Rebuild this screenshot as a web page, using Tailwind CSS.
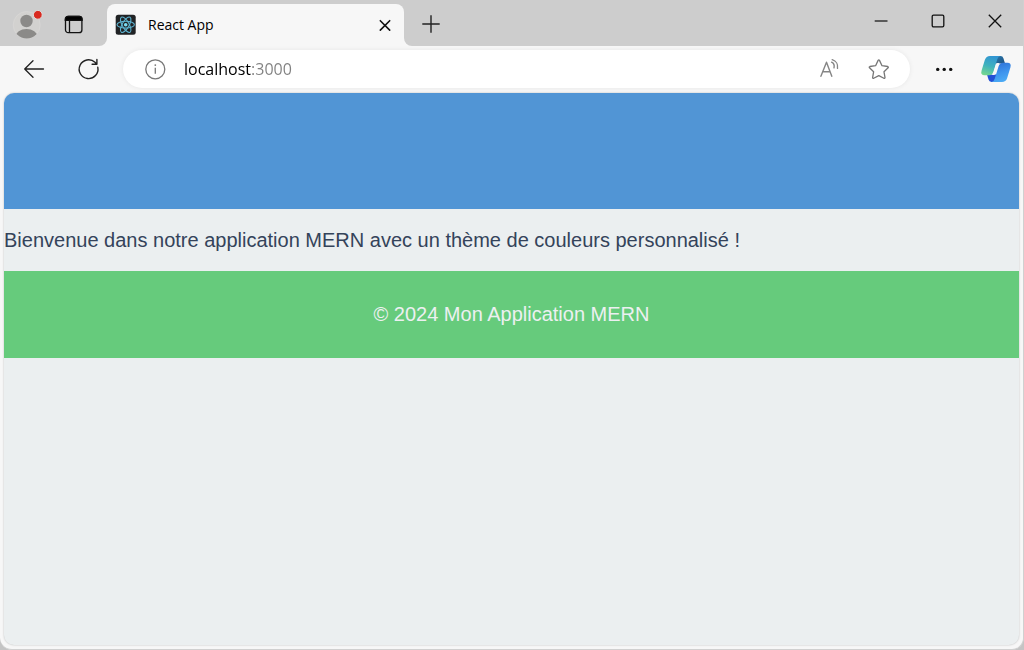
<!DOCTYPE html>
<html lang="fr">
<head>
<meta charset="utf-8">
<meta name="viewport" content="width=device-width, initial-scale=1">
<title>React App</title>
<script src="https://cdn.jsdelivr.net/npm/@tailwindcss/browser@4"></script>
</head>
<body class="bg-[#c4c4c4] font-['Open_Sans',sans-serif] text-black">
<div class="flex min-h-screen flex-col overflow-hidden rounded-b-xl border-r border-b border-[#d0d0d0] bg-[#f7f7f7]">

  <!-- Tab strip -->
  <header class="flex h-[46px]">
    <div class="flex w-[107px] shrink-0 items-center rounded-br-lg bg-[#cdcdcd] pl-3">
      <button aria-label="Profil" class="size-8">
        <svg viewBox="0 0 32 32" class="size-8">
          <defs><clipPath id="avatar"><circle cx="14.7" cy="18" r="13.5"/></clipPath></defs>
          <circle cx="14.7" cy="18" r="13.5" fill="#d2d1cf" stroke="#dad9d7" stroke-width=".7"/>
          <g clip-path="url(#avatar)" fill="#8b8a88"><circle cx="14.5" cy="14" r="6.2"/><ellipse cx="14.5" cy="30" rx="11" ry="8"/></g>
          <circle cx="25.8" cy="7.8" r="4.4" fill="#d9291f" stroke="#dedede" stroke-width="1"/>
        </svg>
      </button>
      <button aria-label="Espaces de travail" class="ml-[20px] mt-1">
        <svg viewBox="0 0 20 20" class="size-5" fill="none" stroke="#111" stroke-width="1.3">
          <rect x="1.5" y="1.5" width="16.4" height="16.2" rx="2.8"/>
          <path d="M1.3 5.3V4a2.7 2.7 0 0 1 2.7-2.7h11.4a2.7 2.7 0 0 1 2.7 2.7v1.3z" fill="#000"/>
          <path d="M5.5 6v11.5"/>
        </svg>
      </button>
    </div>
    <div class="w-[297px] shrink-0 bg-[#cdcdcd] pt-1">
      <div class="flex h-full items-center rounded-t-lg bg-[#f7f7f7] pl-2 pr-3">
        <svg viewBox="0 0 22 22" class="size-[22px]">
          <rect x=".7" y=".7" width="20" height="20" rx="2.5" fill="#212325"/>
          <g fill="none" stroke="#5db3d0" stroke-width="1.1">
            <ellipse cx="10.7" cy="10.7" rx="8.7" ry="3.4"/>
            <ellipse cx="10.7" cy="10.7" rx="8.7" ry="3.4" transform="rotate(60 10.7 10.7)"/>
            <ellipse cx="10.7" cy="10.7" rx="8.7" ry="3.4" transform="rotate(120 10.7 10.7)"/>
          </g>
          <circle cx="10.7" cy="10.7" r="1.8" fill="#7bdcf3"/>
        </svg>
        <span class="ml-[11px] pb-0.5 text-[14px]">React App</span>
        <button aria-label="Fermer l’onglet" class="ml-auto">
          <svg viewBox="0 0 14 14" class="size-[14px]" fill="none" stroke="#111" stroke-width="1.6" stroke-linecap="round"><path d="m2.3 2.7 9.4 9.4m0-9.4-9.4 9.4"/></svg>
        </button>
      </div>
    </div>
    <div class="flex min-w-0 flex-1 items-start justify-between rounded-bl-lg bg-[#cdcdcd]">
      <button aria-label="Nouvel onglet" class="grid h-12 w-[54px] place-items-center">
        <svg viewBox="0 0 18 18" class="size-[18px]" fill="none" stroke="#222" stroke-width="1.4"><path d="M9 .3v17.4M.3 9h17.4"/></svg>
      </button>
      <div class="flex">
        <button aria-label="Réduire" class="grid h-[42px] w-[57px] place-items-center">
          <svg viewBox="0 0 14 14" class="size-[14px]" fill="none" stroke="#333" stroke-width="1.5"><path d="M.7 7h12.8"/></svg>
        </button>
        <button aria-label="Agrandir" class="grid h-[42px] w-[57px] place-items-center">
          <svg viewBox="0 0 14 14" class="size-[14px]" fill="none" stroke="#111" stroke-width="1.3"><rect x="1.2" y="1.2" width="11.6" height="11.6" rx="1.3"/></svg>
        </button>
        <button aria-label="Fermer" class="grid h-[42px] w-[57px] place-items-center">
          <svg viewBox="0 0 14 14" class="size-[14px]" fill="none" stroke="#111" stroke-width="1.3"><path d="m.8.8 12.4 12.4m0-12.4L.8 13.2"/></svg>
        </button>
      </div>
    </div>
  </header>

  <!-- Toolbar -->
  <nav class="flex h-[47px] items-center pb-px pl-[22px] pr-[11px]">
    <button aria-label="Retour">
      <svg viewBox="0 0 24 24" class="size-6" fill="none" stroke="#222" stroke-width="1.3" stroke-linecap="round" stroke-linejoin="round"><path d="M21.5 12H2.7M11 3.7 2.7 12l8.3 8.3"/></svg>
    </button>
    <button aria-label="Actualiser" class="ml-[30px]">
      <svg viewBox="0 0 24 24" class="size-6" fill="none" stroke="#222" stroke-width="1.4" stroke-linecap="round" stroke-linejoin="round"><path d="M21.8 10.3a9.4 9.4 0 1 1-2.8-5l1.6 1.6M20.9 2.5v4.8h-4.8"/></svg>
    </button>
    <div class="ml-[23px] flex h-[38px] min-w-0 flex-1 items-center rounded-full bg-white pl-[21px] pr-5 shadow-[0_0_5px_rgba(0,0,0,0.07)]">
      <button aria-label="Informations sur le site">
        <svg viewBox="0 0 22 22" class="size-[22px]" fill="none" stroke="#777" stroke-width="1.3"><circle cx="11.3" cy="11.3" r="9.5"/><path d="M11.3 9.8v6"/><circle cx="11.3" cy="7.1" r=".9" fill="#777" stroke="none"/></svg>
      </button>
      <input type="text" aria-label="Adresse" value="localhost:3000" class="ml-[18px] h-[30px] min-w-0 flex-1 bg-linear-to-r from-black from-[67px] to-[#808080] to-[67px] bg-clip-text text-[16px] text-transparent outline-none">
      <button aria-label="Lecture à voix haute">
        <svg viewBox="0 0 22 22" class="size-[22px]" fill="none" stroke="#858585" stroke-width="1.4" stroke-linecap="round" stroke-linejoin="round"><path d="M1.9 18.3 7.5 4.2l5.3 14.1M3.6 13.7h7.4M12.6 4.2c2.1 1 2.9 3.5 2.4 5.6M13.2 1.7c4 1.2 6 4.8 5.3 8.6"/></svg>
      </button>
      <button aria-label="Ajouter aux favoris" class="ml-[27px]">
        <svg viewBox="0 0 22 22" class="size-[22px]" fill="none" stroke="#777" stroke-width="1.3" stroke-linejoin="round"><path d="M10.1 2.4q.7-1 1.4 0l2.5 5.3 5.7.8q1.1.4.4 1.3l-4.1 4 1 5.8q0 1.1-1.1.7l-5.1-2.7-5.1 2.7q-1.1.4-1.1-.7l1-5.8-4.1-4q-.7-.9.4-1.3l5.7-.8z"/></svg>
      </button>
    </div>
    <button aria-label="Paramètres et plus" class="ml-6">
      <svg viewBox="0 0 20 20" class="size-5" fill="#111"><circle cx="3.7" cy="10.4" r="1.7"/><circle cx="10.2" cy="10.4" r="1.7"/><circle cx="16.7" cy="10.4" r="1.7"/></svg>
    </button>
    <button aria-label="Copilot" class="ml-[26px]">
      <svg viewBox="0 0 32 30" class="h-[30px] w-8">
        <defs>
          <linearGradient id="ribbonLeft" x1=".5" y1="0" x2=".2" y2="1"><stop stop-color="#3296d2"/><stop offset=".5" stop-color="#3fb2bd"/><stop offset="1" stop-color="#77d88d"/></linearGradient>
          <linearGradient id="ribbonRight" x1=".5" y1="1" x2=".2" y2="0"><stop stop-color="#2f75da"/><stop offset=".5" stop-color="#3f95ee"/><stop offset="1" stop-color="#4eaff6"/></linearGradient>
          <linearGradient id="foldTop" x1="0" y1="0" x2="1" y2="1"><stop stop-color="#2b7dae"/><stop offset="1" stop-color="#1c4e82"/></linearGradient>
        </defs>
        <path d="M15 2h5.5q2.3 0 3 2.4L25 9.5h-9z" fill="url(#foldTop)"/>
        <path d="M7 20.5h9L17 28h-5.5q-2.3 0-3-2.4z" fill="#2350d5"/>
        <path id="ribbon" d="M10 2h10.5q-2.4.3-3.2 3.2l-3.9 12.5q-1.2 3.6-4.3 3.6H4.6q-4.4 0-3-4.8L4.9 5.8Q6.2 2 10 2z" fill="url(#ribbonLeft)"/>
        <path d="M10 2h10.5q-2.4.3-3.2 3.2l-3.9 12.5q-1.2 3.6-4.3 3.6H4.6q-4.4 0-3-4.8L4.9 5.8Q6.2 2 10 2z" transform="rotate(180 16 15)" fill="url(#ribbonRight)"/>
        <path d="M17 9h2.8q-1 .5-1.6 2.2l-2.5 7.9q-.6 1.7-1.5 2h-2.6q1.3-.6 2.1-3.2l2.2-7.1Q16.2 9.4 17 9z" fill="#f7f7f7"/>
      </svg>
    </button>
  </nav>

  <!-- Page -->
  <div class="mx-1 mb-1 flex-1 overflow-hidden rounded-[10px] bg-[#ebeff0] font-['Liberation_Sans',sans-serif] text-[20px] leading-[22px] text-[#34435a] shadow-[0_0_2px_rgba(0,0,0,0.25)]">
    <div class="h-[116px] bg-[#5195d5]"></div>
    <main class="py-5"><p>Bienvenue dans notre application MERN avec un thème de couleurs personnalisé !</p></main>
    <footer class="bg-[#66cb7c] pt-8 pb-[33px] text-center text-[#ecf0f1]"><p>© 2024 Mon Application MERN</p></footer>
  </div>
</div>
</body>
</html>
